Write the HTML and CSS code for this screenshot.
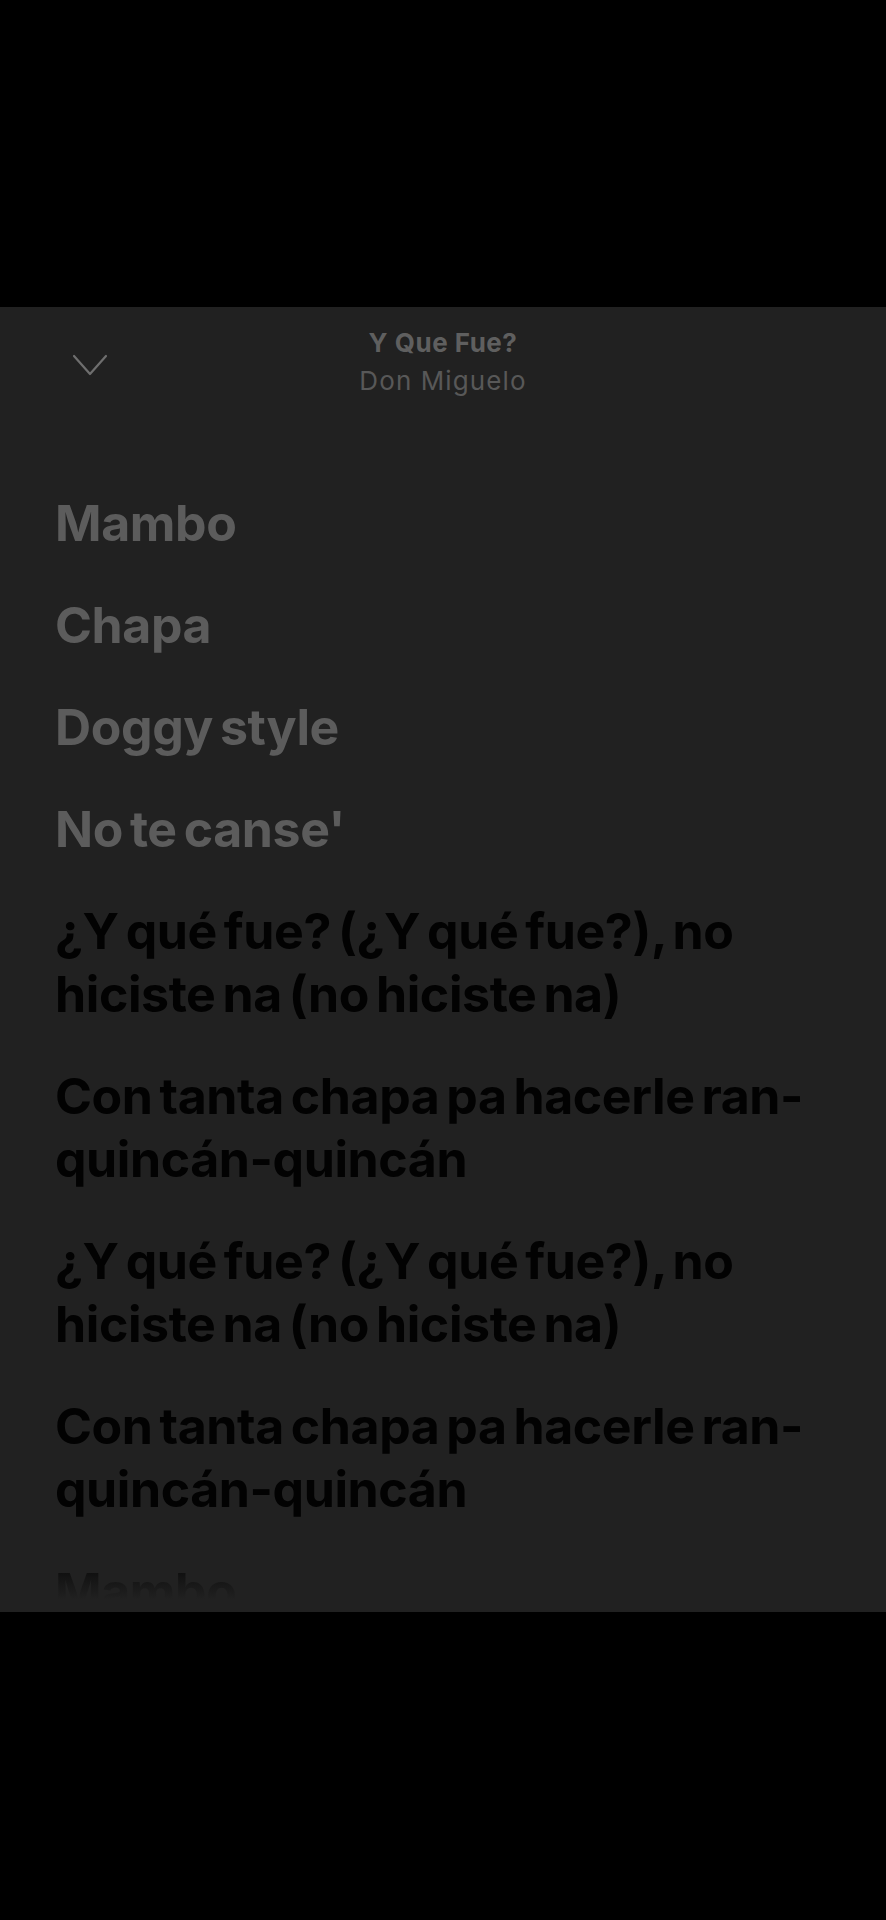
FILE: index.html
```html
<!DOCTYPE html>
<html lang="es">
<head>
<meta charset="utf-8">
<title>Y Que Fue? - Letra</title>
<link rel="stylesheet" href="styles.css">
</head>
<body>
<div class="top-space"></div>
<main class="panel">
  <header class="header">
    <button class="close" aria-label="Cerrar">
      <svg width="36" height="24" viewBox="0 0 36 24"><path d="M2 3 L18 21 L34 3" fill="none" stroke="#6e6e6e" stroke-width="2.2" stroke-linecap="round" stroke-linejoin="round"/></svg>
    </button>
    <div class="track">
      <div class="title">Y Que Fue?</div>
      <div class="artist">Don Miguelo</div>
    </div>
  </header>
  <section class="lyrics">
    <p class="line past">Mambo</p>
    <p class="line past">Chapa</p>
    <p class="line past">Doggy style</p>
    <p class="line past">No te canse'</p>
    <p class="line next">¿Y qué fue? (¿Y qué fue?), no hiciste na (no hiciste na)</p>
    <p class="line next">Con tanta chapa pa hacerle ran-quincán-quincán</p>
    <p class="line next">¿Y qué fue? (¿Y qué fue?), no hiciste na (no hiciste na)</p>
    <p class="line next">Con tanta chapa pa hacerle ran-quincán-quincán</p>
    <p class="line next">Mambo</p>
    <p class="line next">Chapa</p>
  </section>
</main>
<div class="bottom-space"></div>
</body>
</html>
```
FILE: styles.css
```css
html, body {
  margin: 0;
  padding: 0;
  background: #000;
}
body {
  font-family: Inter, "Noto Sans", "Liberation Sans", sans-serif;
  width: 886px;
  height: 1920px;
  overflow: hidden;
  display: flex;
  flex-direction: column;
}
.top-space {
  height: 307px;
  flex: none;
}
.panel {
  height: 1305px;
  flex: none;
  background: #212121;
  display: flex;
  flex-direction: column;
  overflow: hidden;
  position: relative;
}
.header {
  position: relative;
  padding-top: 17px;
  display: flex;
  justify-content: center;
  flex: none;
}
.close {
  position: absolute;
  left: 72px;
  top: 46px;
  background: none;
  border: 0;
  padding: 0;
  width: 36px;
  height: 24px;
  display: block;
}
.close svg { display: block; }
.track {
  text-align: center;
}
.title {
  font-size: 26px;
  line-height: 38px;
  font-weight: 700;
  color: #5f5f5f;
  letter-spacing: 0.5px;
}
.artist {
  font-size: 26px;
  line-height: 38px;
  font-weight: 400;
  color: #585858;
  letter-spacing: 1.1px;
}
.lyrics {
  padding: 92px 57px 0 55px;
  display: flex;
  flex-direction: column;
  gap: 39px;
  flex: 1;
  min-height: 0;
  overflow: hidden;
  position: relative;
}
.lyrics::after {
  content: "";
  position: absolute;
  left: 0;
  right: 0;
  bottom: 0;
  height: 56px;
  background: linear-gradient(to bottom, rgba(33,33,33,0) 0%, rgba(33,33,33,0.6) 40%, #212121 78%);
}
.line {
  margin: 0;
  font-size: 50px;
  line-height: 63px;
  font-weight: 700;
  letter-spacing: -0.4px;
  word-spacing: -4.5px;
  flex: none;
}
.past { color: #5c5c5c; }
.next { color: #020202; }
.bottom-space {
  flex: 1;
}
```
